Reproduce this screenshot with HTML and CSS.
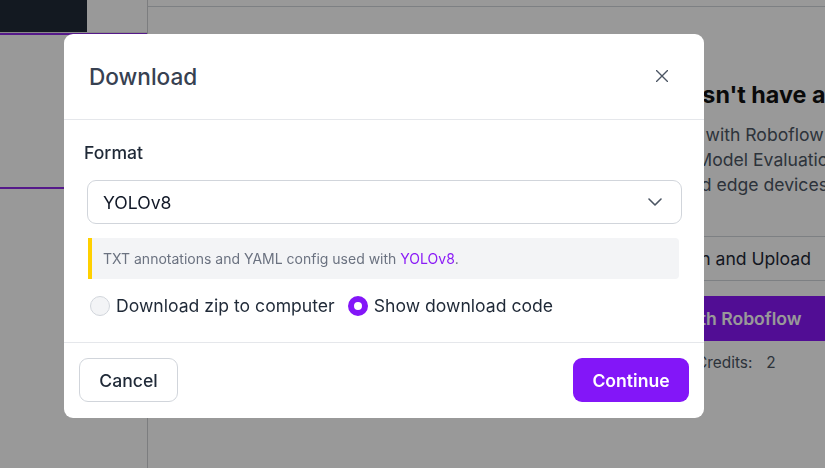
FILE: index.html
```html
<!DOCTYPE html>
<html lang="en">
<head>
<meta charset="utf-8">
<title>Download</title>
<link rel="stylesheet" href="styles.css">
</head>
<body>
<div class="app">
  <aside class="sidebar">
    <div class="brand"></div>
    <div class="brand-rule"></div>
    <div class="version-card"></div>
  </aside>
  <main class="main">
    <div class="main-top"></div>
    <section class="empty">
      <h2 class="empty-title">This version doesn't have a model</h2>
      <p class="empty-text">Train a model with Roboflow Train<br>then explore Model Evaluation<br>to the web and edge devices.</p>
      <div class="row">Custom Train and Upload</div>
      <button class="train-btn">Train with Roboflow</button>
      <div class="credits"><span>Credits:</span><span class="credits-num">2</span></div>
    </section>
  </main>
</div>

<div class="overlay">
  <div class="modal" role="dialog" aria-label="Download">
    <header class="modal-header">
      <h1 class="modal-title">Download</h1>
      <button class="close" aria-label="Close">
        <svg width="12" height="12" viewBox="0 0 12 12"><path d="M0.5 0.5 L11.5 11.5 M11.5 0.5 L0.5 11.5" stroke="#4b5563" stroke-width="1.4" fill="none" stroke-linecap="round"/></svg>
      </button>
    </header>
    <div class="modal-body">
      <div class="label">Format</div>
      <div class="select">
        <span>YOLOv8</span>
        <svg width="14" height="8" viewBox="0 0 14 8"><path d="M1 1 L7 7 L13 1" stroke="#4b5563" stroke-width="1.6" fill="none" stroke-linecap="round" stroke-linejoin="round"/></svg>
      </div>
      <div class="info">TXT annotations and YAML config used with <span class="link">YOLOv8</span>.</div>
      <div class="radios">
        <label class="radio"><span class="dot"></span>Download zip to computer</label>
        <label class="radio"><span class="dot checked"></span>Show download code</label>
      </div>
    </div>
    <footer class="modal-footer">
      <button class="btn btn-cancel">Cancel</button>
      <button class="btn btn-primary">Continue</button>
    </footer>
  </div>
</div>
</body>
</html>
```
FILE: styles.css
```css
* { box-sizing: border-box; }
html, body { margin: 0; padding: 0; }
body {
  width: 825px;
  height: 468px;
  overflow: hidden;
  font-family: Inter, "Noto Sans", sans-serif;
  background: #fff;
  color: #1f2937;
}
button { font-family: inherit; }

.app {
  display: flex;
  height: 468px;
  overflow: hidden;
}
.sidebar {
  width: 148px;
  flex: none;
  border-right: 1px solid #cfd1d4;
  display: flex;
  flex-direction: column;
}
.brand {
  width: 87px;
  height: 32px;
  background: #212b37;
}
.brand-rule {
  height: 1px;
  background: #e6e6e6;
}
.version-card {
  height: 156px;
  border-top: 2px solid #8e2be6;
  border-bottom: 2px solid #8e2be6;
}
.main {
  flex: 1;
  min-width: 0;
  display: flex;
  flex-direction: column;
  overflow: hidden;
}
.main-top {
  height: 7px;
  border-bottom: 1px solid #d1d5db;
}
.empty {
  margin-left: 440px;
  width: 400px;
  flex: none;
}
.empty-title {
  margin: 73px 0 0 -74px;
  font-size: 23.3px;
  font-weight: 700;
  line-height: 30px;
  color: #111;
  white-space: nowrap;
}
.empty-text {
  margin: 12px 0 0;
  font-size: 17.6px;
  line-height: 25px;
  color: #4b5563;
  white-space: nowrap;
}
.row {
  margin-top: 39px;
  height: 45px;
  border-top: 1px solid #d1d5db;
  border-bottom: 1px solid #d1d5db;
  display: flex;
  align-items: center;
  padding-left: 12px;
  font-size: 17.6px;
  color: #1f2937;
  width: 700px;
  white-space: nowrap;
}
.train-btn {
  display: block;
  margin-top: 15px;
  height: 45px;
  width: 700px;
  border: 0;
  background: #8716f7;
  color: #fff;
  font-size: 17.6px;
  font-weight: 600;
  text-align: left;
  padding: 0 0 0 45px;
  white-space: nowrap;
}
.credits {
  margin-top: 12px;
  font-size: 15.4px;
  color: #4b5563;
  display: flex;
  gap: 14px;
  padding-left: 108px;
}

.overlay {
  position: fixed;
  inset: 0;
  background: rgba(0, 0, 0, 0.4);
  padding: 34px 0 0 64px;
}
.modal {
  width: 640px;
  background: #fff;
  border-radius: 9px;
  display: flex;
  flex-direction: column;
}
.modal-header {
  height: 86px;
  border-bottom: 1px solid #e5e7eb;
  display: flex;
  align-items: center;
  justify-content: space-between;
  padding: 0 36px 1px 25px;
}
.modal-title {
  margin: 0;
  font-size: 22.6px;
  font-weight: 500;
  color: #374151;
}
.close {
  border: 0;
  background: none;
  padding: 0;
  width: 12px;
  height: 12px;
  display: flex;
}
.modal-body {
  padding: 20px 22px 23px 20px;
  display: flex;
  flex-direction: column;
}
.label {
  font-size: 17.6px;
  line-height: 26px;
  font-weight: 500;
  color: #1f2937;
}
.select {
  margin: 14px 0 0 3px;
  height: 44px;
  border: 1px solid #d1d5db;
  border-radius: 9px;
  display: flex;
  align-items: center;
  justify-content: space-between;
  padding: 0 19px 0 15px;
  font-size: 17.6px;
  color: #111827;
}
.info {
  margin: 14px 3px 0 4px;
  height: 41px;
  background: #f3f4f6;
  border-left: 4px solid #ffd000;
  border-radius: 0 4px 4px 0;
  display: flex;
  align-items: center;
  padding-left: 11px;
  font-size: 14px;
  color: #6b7280;
  white-space: pre;
}
.link { color: #8b1cf6; }
.radios {
  margin: 14px 0 0 6px;
  display: flex;
  gap: 13px;
  align-items: center;
}
.radio {
  display: flex;
  align-items: center;
  gap: 6px;
  font-size: 17.6px;
  line-height: 26px;
  color: #1f2937;
}
.dot {
  width: 20px;
  height: 20px;
  border-radius: 50%;
  border: 1px solid #d1d5db;
  background: #f3f4f6;
  flex: none;
}
.dot.checked {
  border: 6px solid #8316f8;
  background: #fff;
}
.modal-footer {
  border-top: 1px solid #e5e7eb;
  padding: 15px 15px 16px;
  display: flex;
  justify-content: space-between;
}
.btn {
  height: 44px;
  border-radius: 9px;
  font-size: 17.6px;
  cursor: pointer;
}
.btn-cancel {
  width: 99px;
  background: #fff;
  border: 1px solid #d1d5db;
  color: #1f2937;
  font-weight: 500;
}
.btn-primary {
  width: 116px;
  background: #8316f8;
  border: 0;
  color: #fff;
  font-weight: 600;
}
```
